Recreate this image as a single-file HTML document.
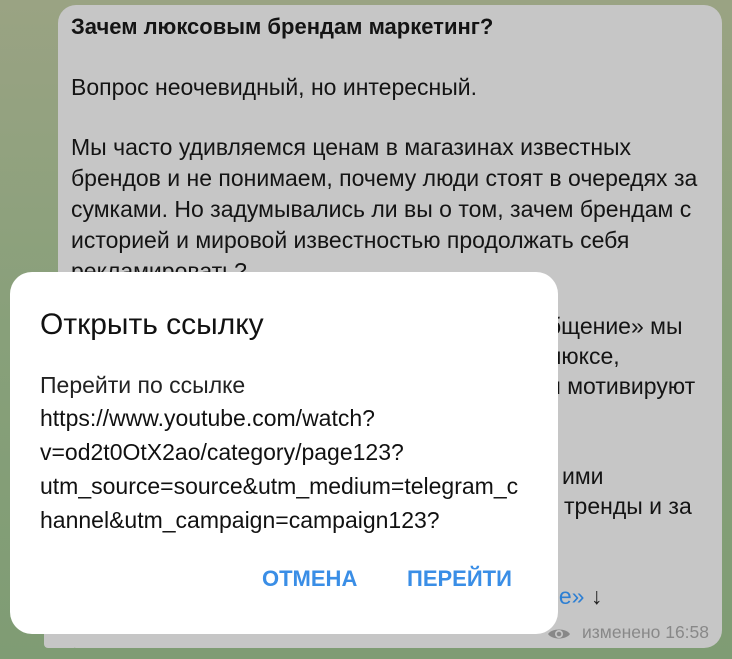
<!DOCTYPE html>
<html><head><meta charset="utf-8"><style>
body{margin:0;width:732px;height:659px;overflow:hidden;background:#8b9c78;font-family:"Liberation Sans",sans-serif;position:relative}
.bg{position:absolute;inset:0;background:linear-gradient(180deg,#9aa383 0%,#88a07a 50%,#7f9c74 100%)}
.bub{position:absolute;left:58px;top:5px;width:664px;height:643px;background:#c6c6c6;border-radius:18px}
.tail{position:absolute;left:44px;top:628px;width:30px;height:20px;background:#c6c6c6;border-radius:0 0 0 4px}
.l{position:absolute;left:71px;font-size:23px;line-height:1;color:#141414;white-space:nowrap}
.dlg{position:absolute;left:10px;top:272px;width:548px;height:362px;background:#fff;border-radius:22px}
.d{position:absolute;white-space:nowrap;color:#111;line-height:1;font-size:23px;left:40px}
.btn{position:absolute;top:568px;color:#3a8ee6;font-size:22px;line-height:1;font-weight:bold}
</style></head><body>
<div class="bg"></div>
<div class="tail"></div>
<div class="bub"></div>
<div class="l" style="top:16px;font-weight:bold;font-size:22px">Зачем люксовым брендам маркетинг?</div>
<div class="l" style="top:76px">Вопрос неочевидный, но интересный.</div>
<div class="l" style="top:136px">Мы часто удивляемся ценам в магазинах известных</div>
<div class="l" style="top:167px">брендов и не понимаем, почему люди стоят в очередях за</div>
<div class="l" style="top:198px">сумками. Но задумывались ли вы о том, зачем брендам с</div>
<div class="l" style="top:229px">историей и мировой известностью продолжать себя</div>
<div class="l" style="top:260px">рекламировать?</div>
<div class="l" style="left:548px;top:315px">бщение» мы</div>
<div class="l" style="left:548px;top:345px">люксе,</div>
<div class="l" style="left:548px;top:375px">и мотивируют</div>
<div class="l" style="left:562px;top:465px">ими</div>
<div class="l" style="left:564px;top:495px">тренды и за</div>
<div class="l" style="left:546px;top:585px;color:#2d7fd3">ие»<span style="color:#222"> ↓</span></div>
<svg style="position:absolute;left:547px;top:626px" width="24" height="16" viewBox="0 0 24 16"><path d="M1 8C5 2 19 2 23 8C19 14 5 14 1 8Z" fill="#888"/><circle cx="12" cy="8" r="4" fill="#c6c6c6"/><circle cx="12" cy="8" r="2.3" fill="#888"/></svg>
<div class="l" style="left:582px;top:624px;font-size:17.5px;color:#888">изменено 16:58</div>
<div class="dlg"></div>
<div class="d" style="top:310px;font-size:30px">Открыть ссылку</div>
<div class="d" style="top:374px;color:#222">Перейти по ссылке</div>
<div class="d" style="top:407px">https://www.youtube.com/watch?</div>
<div class="d" style="top:441px">v=od2t0OtX2ao/category/page123?</div>
<div class="d" style="top:475px">utm_source=source&amp;utm_medium=telegram_c</div>
<div class="d" style="top:509px">hannel&amp;utm_campaign=campaign123?</div>
<div class="btn" style="left:262px">ОТМЕНА</div>
<div class="btn" style="left:407px">ПЕРЕЙТИ</div>
</body></html>
